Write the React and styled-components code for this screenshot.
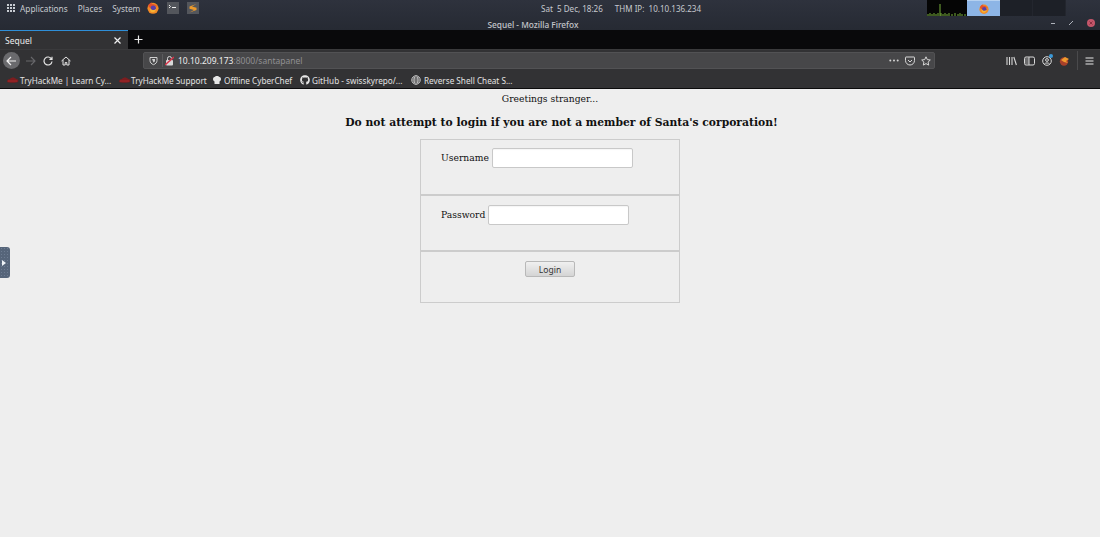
import styled, { createGlobalStyle } from "styled-components";
import { FaGithub } from "react-icons/fa";

const GlobalStyle = createGlobalStyle`
  html, body { margin: 0; padding: 0; height: 100%; background: #eeeeee; }
  #root { height: 100%; }
  * { box-sizing: border-box; }
`;

const uiFont = `"Noto Sans", "Open Sans", sans-serif`;
const pageFont = `"DejaVu Serif", "Liberation Serif", serif`;

const bookmarks = [
  { label: "TryHackMe | Learn Cy...", icon: "thm", width: 106, gap: 1 },
  { label: "TryHackMe Support", icon: "thm", width: 88, gap: 0 },
  { label: "Offline CyberChef", icon: "chef", width: 82, gap: 2 },
  { label: "GitHub - swisskyrepo/...", icon: "github", width: 105, gap: 2 },
  { label: "Reverse Shell Cheat S...", icon: "globe", width: 104, gap: 3 },
];

const FirefoxLogo = ({ size = 13 }) => (
  <svg width={size} height={size} viewBox="0 0 16 16">
    <circle cx="8" cy="8.4" r="7.4" fill="#f28a24" />
    <path d="M1.500 5c1 -2.500 3 -4 5.500 -4.300c-1 1 -1 2 -1 2.300c2 -1 6 0 8.500 4c-2 -2 -4 -2 -5.500 -2c-2 0 -4 1 -3 3c-2 0 -4 -1 -4.500 -3z" fill="#e5512b" />
    <circle cx="8.400" cy="8.300" r="3.600" fill="#5b3fa8" />
    <path d="M4.600 8c1 3 5 4 7.600 1c0 3 -3 5.500 -6 4.500c-2.200 -1 -2.600 -3.500 -1.600 -5.500z" fill="#f7b334" />
  </svg>
);

const BookmarkIcon = ({ type }) => {
  if (type === "thm") {
    return (
      <svg width="13" height="10" viewBox="0 0 13 10">
        <path d="M1 7c0 -2 1 -3 3 -3c1 -2 5 -2 6 0c2 0 3 1 2 3c-1 1 -10 1 -11 0z" fill="#7c1d1f" />
        <path d="M2 6h9" stroke="#a5282a" strokeWidth="1" />
      </svg>
    );
  }
  if (type === "chef") {
    return (
      <svg width="10" height="10" viewBox="0 0 10 10">
        <path d="M2.500 6.500c-2 -1 -2 -4 0 -4.500c1 -1.500 4 -1.500 5 0c2 .5 2 3.500 0 4.500v2.500h-5z" fill="#e6e6e6" />
      </svg>
    );
  }
  if (type === "github") {
    return <FaGithub size={10} color="#e6e6e6" />;
  }
  return (
    <svg width="10" height="10" viewBox="0 0 10 10" fill="none" stroke="#cfcfcf" strokeWidth=".8">
      <circle cx="5" cy="5" r="4.300" />
      <ellipse cx="5" cy="5" rx="2" ry="4.300" />
      <path d="M.7 5h8.600M1.300 3h7.400M1.300 7h7.400" />
    </svg>
  );
};

export default function App() {
  return (
    <>
      <GlobalStyle />
      <Screen>
        <SystemChrome>
          <TopPanel>
            <PanelLeft>
              <AppsGrid>
                {Array.from({ length: 9 }).map((_, i) => <i key={i} />)}
              </AppsGrid>
              <PanelItem>Applications</PanelItem>
              <PanelItem>Places</PanelItem>
              <PanelItem>System</PanelItem>
              <Launchers>
                <FirefoxLogo size={12} />
                <Launcher>
                  <svg width="10" height="8" viewBox="0 0 10 8" fill="none" stroke="#f0f0f0" strokeWidth="1">
                    <path d="M1 1l1.500 1.500L1 4M4 3.500h4" />
                  </svg>
                </Launcher>
                <Launcher>
                  <svg width="10" height="11" viewBox="0 0 10 11">
                    <path d="M8.500 1L1.500 3.500v2.300l4.500 1.200L1.500 9.500l7 -2.500V4.800L4 3.600z" fill="#eb9a2c" />
                  </svg>
                </Launcher>
              </Launchers>
            </PanelLeft>
            <PanelCenter>
              <span>Sat&nbsp; 5 Dec, 18:26</span>
              <span>THM IP:&nbsp; 10.10.136.234</span>
            </PanelCenter>
            <PanelRight>
              <CpuGraph>
                <svg width="40" height="16" viewBox="0 0 40 16">
                  <path d="M1 16V14M3 16V13M5 16V14M7 16V13M9 16V14M11 16V13M13 16V4M14 16V13M16 16V14M18 16V13M20 16V14M22 16V13M25 16V14M28 16V13M31 16V14M33 16V13M35 16V14M38 16V14" stroke="#79b03a" strokeWidth="1" />
                </svg>
              </CpuGraph>
              <ActiveWindow><FirefoxLogo size={10} /></ActiveWindow>
              <WindowSlot />
              <WindowSlot />
            </PanelRight>
          </TopPanel>
          <TitleBar>
            <WindowTitle>Sequel - Mozilla Firefox</WindowTitle>
            <WindowButtons>
              <svg width="5" height="5" viewBox="0 0 5 5"><path d="M0 2.500h4" stroke="#aeb2ba" /></svg>
              <svg width="5" height="5" viewBox="0 0 5 5"><path d="M0 4L4 0" stroke="#aeb2ba" /></svg>
              <CloseDot>
                <svg width="4" height="4" viewBox="0 0 4 4"><path d="M.5 .5l3 3M3.500 .5l-3 3" stroke="#8a2f40" /></svg>
              </CloseDot>
            </WindowButtons>
          </TitleBar>
        </SystemChrome>

        <TabStrip>
          <ActiveTab>
            <span>Sequel</span>
            <svg width="7" height="7" viewBox="0 0 7 7"><path d="M.5 .5l6 6M6.500 .5l-6 6" stroke="#f0f0f0" strokeWidth="1.200" /></svg>
          </ActiveTab>
          <NewTab>
            <svg width="9" height="9" viewBox="0 0 9 9"><path d="M4.500 .5v8M.5 4.500h8" stroke="#e8e8e8" strokeWidth="1.200" /></svg>
          </NewTab>
        </TabStrip>

        <NavBar>
          <BackButton>
            <svg width="11" height="10" viewBox="0 0 11 10" fill="none" stroke="#f2f2f2" strokeWidth="1.200">
              <path d="M10 5H1M5 1L1 5l4 4" />
            </svg>
          </BackButton>
          <NavIcon>
            <svg width="11" height="10" viewBox="0 0 11 10" fill="none" stroke="#68686b" strokeWidth="1.100">
              <path d="M1 5h9M6 1l4 4l-4 4" />
            </svg>
          </NavIcon>
          <NavIcon>
            <svg width="10" height="10" viewBox="0 0 10 10" fill="none" stroke="#e4e4e4" strokeWidth="1.200">
              <path d="M8.500 3A4 4 0 1 0 9 5.500M9 .8V3.400H6.400" />
            </svg>
          </NavIcon>
          <NavIcon>
            <svg width="10" height="10" viewBox="0 0 10 10" fill="none" stroke="#e4e4e4" strokeWidth="1">
              <path d="M.5 5L5 1l4.500 4M2 4v5h2.200V6.500h1.600V9H8V4" />
            </svg>
          </NavIcon>
          <UrlBar>
            <svg width="9" height="10" viewBox="0 0 9 10" fill="none" stroke="#cfcfcf" strokeWidth="1">
              <path d="M1 1.500h7v3c0 2 -1.500 3.500 -3.500 4.200C2.500 8 1 6.500 1 4.500z" />
              <path d="M3 3h3v1.500c0 1 -.7 1.800 -1.500 2z" fill="#cfcfcf" stroke="none" />
            </svg>
            <UrlDivider />
            <svg width="9" height="10" viewBox="0 0 9 10">
              <rect x="1" y="4" width="7" height="5.500" rx="1" fill="#d9d9d9" />
              <path d="M2.500 4V2.500a2 2 0 0 1 4 0V4" fill="none" stroke="#d9d9d9" />
              <path d="M0 9L9 1" stroke="#d8344a" strokeWidth="1.500" />
            </svg>
            <UrlText>
              <strong>10.10.209.173</strong>:8000/santapanel
            </UrlText>
            <UrlActions>
              <svg width="10" height="3" viewBox="0 0 10 3" fill="#d4d4d4">
                <circle cx="1.300" cy="1.500" r="1" /><circle cx="5" cy="1.500" r="1" /><circle cx="8.700" cy="1.500" r="1" />
              </svg>
              <svg width="10" height="10" viewBox="0 0 10 10" fill="none" stroke="#d8d8d8" strokeWidth="1">
                <path d="M1 1h8c.3 0 .5 .2 .5 .5V4.500C9.500 7 7.500 9 5 9S.5 7 .5 4.500V1.500C.5 1.200 .7 1 1 1z" />
                <path d="M3 4l2 2l2 -2" />
              </svg>
              <svg width="10" height="10" viewBox="0 0 10 10" fill="none" stroke="#d8d8d8" strokeWidth="1">
                <path d="M5 .8l1.300 2.800l3 .4l-2.200 2.100l.6 3L5 7.600L2.300 9.100l.6 -3L.7 4l3 -.4z" />
              </svg>
            </UrlActions>
          </UrlBar>
          <ToolButtons>
            <svg width="11" height="10" viewBox="0 0 11 10" fill="none" stroke="#d8d8d8" strokeWidth="1.100">
              <path d="M1 1v8M3.500 1v8M6 1v8M7.800 1l2.600 8" />
            </svg>
            <svg width="11" height="10" viewBox="0 0 11 10" fill="none" stroke="#d8d8d8" strokeWidth="1">
              <rect x=".5" y="1" width="10" height="8" rx="1.500" />
              <path d="M5 1v8" />
              <path d="M1 2h4v6H1z" fill="#d8d8d8" fillOpacity=".35" stroke="none" />
            </svg>
            <AccountIcon>
              <svg width="10" height="10" viewBox="0 0 10 10" fill="none" stroke="#d8d8d8" strokeWidth="1">
                <circle cx="5" cy="5" r="4.300" />
                <circle cx="5" cy="4" r="1.400" />
                <path d="M2.400 8c.6 -1.400 4.600 -1.400 5.200 0" />
              </svg>
            </AccountIcon>
            <svg width="11" height="10" viewBox="0 0 11 10">
              <circle cx="5" cy="5.500" r="4.200" fill="#a8402a" />
              <path d="M2 4l4 -3l4 2l-3 2l2 2l-4 -1z" fill="#f09a2e" />
            </svg>
            <ToolDivider />
            <svg width="9" height="8" viewBox="0 0 9 8" fill="none" stroke="#e8e8e8" strokeWidth="1.100">
              <path d="M.5 1h8M.5 4h8M.5 7h8" />
            </svg>
          </ToolButtons>
        </NavBar>

        <BookmarkBar>
          {bookmarks.map((b) => (
            <Bookmark key={b.label} $width={b.width} $gap={b.gap}>
              <BookmarkIcon type={b.icon} />
              <span>{b.label}</span>
            </Bookmark>
          ))}
        </BookmarkBar>

        <Page>
          <Greeting>Greetings stranger...</Greeting>
          <Warning>Do not attempt to login if you are not a member of Santa's corporation!</Warning>
          <LoginForm>
            <UsernameRow>
              <label>Username</label>
              <TextInput type="text" />
            </UsernameRow>
            <PasswordRow>
              <label>Password</label>
              <TextInput type="password" />
            </PasswordRow>
            <ButtonRow>
              <LoginButton type="button">Login</LoginButton>
            </ButtonRow>
          </LoginForm>
          <SideHandle>
            <svg width="4" height="6" viewBox="0 0 4 6"><path d="M0 0l4 3l-4 3z" fill="#f0f4f8" /></svg>
          </SideHandle>
        </Page>
      </Screen>
    </>
  );
}

const Screen = styled.div`
  display: flex;
  flex-direction: column;
  height: 537px;
  overflow: hidden;
`;
const SystemChrome = styled.div`
  height: 30px;
  background: linear-gradient(#2e323d, #262a33);
  color: #c6c9ce;
  font-family: ${uiFont};
  font-size: 8.3px;
`;
const TopPanel = styled.div`
  display: grid;
  grid-template-columns: 541px 386px 1fr;
  height: 16px;
  align-items: center;
`;
const PanelLeft = styled.div`
  display: flex;
  align-items: center;
  padding-left: 7px;
`;
const AppsGrid = styled.div`
  display: grid;
  grid-template-columns: repeat(3, 2px);
  gap: 1px;
  margin-right: 5px;
  i { width: 2px; height: 2px; background: #c8ccd2; }
`;
const PanelItem = styled.span`
  margin-right: 10px;
  &:last-of-type { margin-right: 7px; }
`;
const Launchers = styled.div`
  display: flex;
  align-items: center;
  gap: 8px;
`;
const Launcher = styled.div`
  display: flex;
  align-items: center;
  justify-content: center;
  width: 12px;
  height: 12px;
  background: #53565c;
`;
const PanelCenter = styled.div`
  display: flex;
  gap: 12px;
  font-size: 8.05px;
`;
const PanelRight = styled.div`
  display: flex;
  height: 16px;
`;
const CpuGraph = styled.div`
  width: 40px;
  background: #050505;
  display: flex;
`;
const ActiveWindow = styled.div`
  width: 33px;
  display: flex;
  align-items: center;
  justify-content: center;
  background: #8db5e6;
  border-top: 1px solid #b6d1f0;
`;
const WindowSlot = styled.div`
  width: 33px;
  background: #1d2027;
  border-right: 1px solid #23262e;
`;
const TitleBar = styled.div`
  position: relative;
  height: 14px;
  display: flex;
  align-items: center;
  justify-content: center;
  padding: 2px 34px 0 0;
`;
const WindowTitle = styled.span`
  font-size: 8.3px;
  font-weight: 500;
  color: #c3c6cb;
`;
const WindowButtons = styled.div`
  position: absolute;
  right: 5px;
  top: 3px;
  display: flex;
  align-items: center;
  gap: 13px;
`;
const CloseDot = styled.div`
  display: flex;
  align-items: center;
  justify-content: center;
  width: 8px;
  height: 8px;
  border-radius: 50%;
  background: #c4566a;
`;
const TabStrip = styled.div`
  display: flex;
  height: 19px;
  background: #09090b;
  color: #ececec;
  font-family: ${uiFont};
  font-size: 8.5px;
`;
const ActiveTab = styled.div`
  display: flex;
  align-items: center;
  justify-content: space-between;
  width: 128px;
  padding: 0 7px 0 5px;
  background: #323234;
  border-top: 1px solid #2f8fd8;
`;
const NewTab = styled.div`
  display: flex;
  align-items: center;
  justify-content: center;
  width: 20px;
`;
const NavBar = styled.div`
  display: flex;
  align-items: center;
  height: 21px;
  padding: 1px 0 0 3px;
  background: #323234;
  border-top: 1px solid #3a3a3c;
`;
const BackButton = styled.div`
  display: flex;
  align-items: center;
  justify-content: center;
  width: 17px;
  height: 17px;
  border-radius: 50%;
  background: #6a6a6d;
  margin-right: 1px;
`;
const NavIcon = styled.div`
  display: flex;
  align-items: center;
  justify-content: center;
  width: 18px;
  height: 17px;
`;
const UrlBar = styled.div`
  display: flex;
  align-items: center;
  width: 792px;
  height: 17px;
  margin-left: 68px;
  padding: 0 3px 0 5px;
  background: #474749;
  border: 1px solid #525254;
  border-radius: 2px;
`;
const UrlDivider = styled.div`
  width: 1px;
  height: 13px;
  margin: 0 2px 0 4px;
  background: #5c5c5e;
`;
const UrlText = styled.div`
  margin-left: 4px;
  font-family: ${uiFont};
  font-size: 8.5px;
  color: #8f8f92;
  strong { font-weight: 400; color: #ededed; }
`;
const UrlActions = styled.div`
  display: flex;
  align-items: center;
  gap: 6px;
  margin-left: auto;
`;
const ToolButtons = styled.div`
  display: flex;
  align-items: center;
  gap: 7px;
  margin-left: 71px;
`;
const AccountIcon = styled.div`
  position: relative;
  display: flex;
  &::after {
    content: "";
    position: absolute;
    right: -1px;
    top: -2px;
    width: 4px;
    height: 4px;
    border-radius: 50%;
    background: #3a9ad9;
  }
`;
const ToolDivider = styled.div`
  width: 1px;
  height: 19px;
  background: #4a4a4c;
`;
const BookmarkBar = styled.div`
  display: flex;
  align-items: center;
  gap: 6px;
  height: 19px;
  padding: 2px 0 0 6px;
  background: #323234;
  border-bottom: 1px solid #0b0b0c;
  color: #e2e2e2;
  font-family: ${uiFont};
  font-size: 8.2px;
  white-space: nowrap;
`;
const Bookmark = styled.div`
  display: flex;
  align-items: center;
  gap: ${(p) => p.$gap}px;
  width: ${(p) => p.$width}px;
  svg { flex: none; }
`;
const Page = styled.main`
  position: relative;
  flex: 1;
  background: #eeeeee;
  color: #111;
  font-family: ${pageFont};
  font-size: 9.2px;
`;
const Greeting = styled.p`
  margin: 3px 0 0;
  text-align: center;
  line-height: 13px;
`;
const Warning = styled.h1`
  margin: 11px 0 0;
  padding-left: 23px;
  text-align: center;
  font-size: 10.75px;
  line-height: 14px;
`;
const LoginForm = styled.form`
  display: flex;
  flex-direction: column;
  width: 260px;
  margin: 9px auto 0;
`;
const UsernameRow = styled.div`
  display: flex;
  align-items: flex-start;
  gap: 3px;
  height: 55px;
  padding: 8px 0 0 20px;
  border: 1px solid #cccccc;
  border-bottom-width: 0;
  label { line-height: 20px; }
`;
const PasswordRow = styled(UsernameRow)`
  height: 56px;
  padding-top: 9px;
  border-top-width: 2px;
`;
const TextInput = styled.input`
  width: 141px;
  height: 20px;
  background: #fff;
  border: 1px solid #c8c8c8;
  border-radius: 2px;
  box-shadow: inset 0 1px 1px rgba(0, 0, 0, 0.04);
`;
const ButtonRow = styled.div`
  display: flex;
  justify-content: center;
  align-items: flex-start;
  height: 53px;
  padding-top: 9px;
  border: 1px solid #cccccc;
  border-top-width: 2px;
`;
const LoginButton = styled.button`
  width: 50px;
  height: 16px;
  padding: 0;
  font-family: ${uiFont};
  font-size: 8.5px;
  color: #333;
  background: linear-gradient(#f0f0f0, #d4d4d4);
  border: 1px solid #b8b8b8;
  border-radius: 2px;
`;
const SideHandle = styled.div`
  position: absolute;
  left: 0;
  top: 158px;
  display: flex;
  align-items: center;
  padding-left: 2px;
  width: 10px;
  height: 31px;
  background: radial-gradient(#6d7c92 1px, transparent 1px) 0 0 / 3px 3px, #56657a;
  border-radius: 0 3px 3px 0;
`;
